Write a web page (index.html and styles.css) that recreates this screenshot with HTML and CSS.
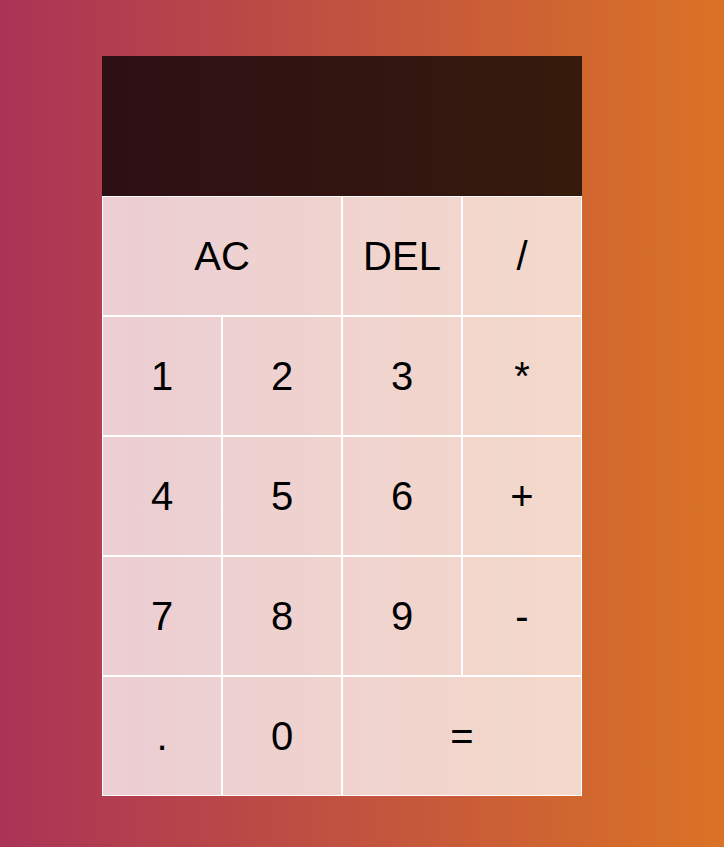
FILE: index.html
```html
<!DOCTYPE html>
<html lang="en">
<head>
<meta charset="utf-8">
<title>Calculator</title>
<link rel="stylesheet" href="styles.css">
</head>
<body>
<div class="calculator-grid">
  <div class="output">
    <div class="previous-operand"></div>
    <div class="current-operand"></div>
  </div>
  <button class="span-two">AC</button>
  <button>DEL</button>
  <button>/</button>
  <button>1</button>
  <button>2</button>
  <button>3</button>
  <button>*</button>
  <button>4</button>
  <button>5</button>
  <button>6</button>
  <button>+</button>
  <button>7</button>
  <button>8</button>
  <button>9</button>
  <button>-</button>
  <button>.</button>
  <button>0</button>
  <button class="span-two">=</button>
</div>
</body>
</html>
```
FILE: styles.css
```css
*, *::before, *::after {
  box-sizing: border-box;
  font-family: "Liberation Sans", Arial, sans-serif;
  font-weight: normal;
}

html {
  min-height: 100%;
}

body {
  margin: 0;
  min-height: 100vh;
  padding: 56px 0 0 102px;
  background: linear-gradient(to right, #ab3357, #da7326);
}

.calculator-grid {
  display: grid;
  grid-template-columns: repeat(4, 120px);
  grid-template-rows: 140px repeat(5, 120px);
}

.calculator-grid > button {
  cursor: pointer;
  font-size: 40px;
  color: #000;
  border: 1px solid #fff;
  outline: none;
  padding: 0;
  background-color: rgba(255, 255, 255, 0.75);
}

.span-two {
  grid-column: span 2;
}

.output {
  grid-column: 1 / -1;
  background-color: rgba(0, 0, 0, 0.74);
  display: flex;
  flex-direction: column;
  align-items: flex-end;
  justify-content: space-around;
  padding: 10px;
  word-wrap: break-word;
  word-break: break-all;
}

.previous-operand {
  color: rgba(255, 255, 255, 0.75);
  font-size: 24px;
}

.current-operand {
  color: #fff;
  font-size: 40px;
}
```
